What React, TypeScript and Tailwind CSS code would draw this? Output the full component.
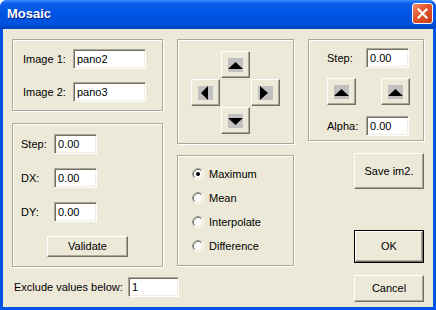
import * as React from 'react';

const raised =
  'border border-t-white border-l-white border-r-[#716f64] border-b-[#716f64] shadow-[inset_-1px_-1px_0_#aca899] bg-[#ece9d8]';
const sunken =
  'border border-t-[#aca899] border-l-[#aca899] border-r-white border-b-white shadow-[inset_1px_1px_0_#716f64,inset_-1px_-1px_0_#f1efe2] bg-white';
const group = 'border border-[#aca899] shadow-[inset_1px_1px_0_#fff,1px_1px_0_#fff]';

const Field: React.FC<{ value: string; w: string }> = ({ value, w }) => (
  <input
    readOnly
    defaultValue={value}
    className={`${sunken} ${w} h-[20px] px-[3px] text-[11px] text-black outline-none font-['Liberation_Sans']`}
  />
);

type Dir = 'up' | 'down' | 'left' | 'right';

const arrowPoints: Record<Dir, string> = {
  up: '0,11 15,11 7.5,4',
  down: '0,4 15,4 7.5,11',
  left: '10,0 10,14 3,7',
  right: '2,0 2,14 10,7',
};

const ArrowButton: React.FC<{ dir: Dir }> = ({ dir }) => (
  <button className={`${raised} w-[29px] h-[27px] flex items-center justify-center`}>
    <svg width="15" height="14" viewBox="0 0 15 14">
      <rect width="15" height="14" fill="#c0c0c0" />
      <polygon points={arrowPoints[dir]} fill="#000" />
    </svg>
  </button>
);

const Radio: React.FC<{ label: string; checked?: boolean }> = ({ label, checked }) => (
  <div className="h-[24px] flex items-center">
    <svg width="12" height="12" viewBox="0 0 12 12" className="ml-[14px]">
      <circle cx="6" cy="6" r="5.5" fill="#fff" />
      <path d="M9.89 2.11 A5.5 5.5 0 0 0 2.11 9.89" stroke="#9d9a8c" fill="none" />
      <path d="M9.18 2.82 A4.5 4.5 0 0 0 2.82 9.18" stroke="#716f64" fill="none" />
      <path d="M2.11 9.89 A5.5 5.5 0 0 0 9.89 2.11" stroke="#fff" fill="none" />
      <path d="M2.82 9.18 A4.5 4.5 0 0 0 9.18 2.82" stroke="#e2dfd0" fill="none" />
      {checked && <circle cx="6" cy="6" r="2" fill="#000" />}
    </svg>
    <span className="ml-[5px]">{label}</span>
  </div>
);

export default function App() {
  return (
    <div className="w-[436px] h-[310px] flex flex-col bg-[#0054e3] rounded-t-[7px] font-['Liberation_Sans'] text-[11px] text-black select-none">
      {/* title bar */}
      <div className="h-[29px] flex items-center justify-between pl-[7px] pr-[3px] rounded-t-[7px] bg-[linear-gradient(180deg,#3d8cff_0%,#0a5fe9_12%,#0055e5_45%,#0052df_80%,#0043c2_100%)]">
        <span className="text-white font-bold text-[13px] [text-shadow:1px_1px_0_#0b1f8c] -mt-[1px]">Mosaic</span>
        <div className="w-[21px] h-[21px] -mt-[3px] rounded-[3px] border border-white flex items-center justify-center bg-[linear-gradient(135deg,#f0906c_0%,#e2532a_45%,#c8401c_100%)]">
          <svg width="11" height="11" viewBox="0 0 11 11">
            <path d="M1.5 1.5 L9.5 9.5 M9.5 1.5 L1.5 9.5" stroke="#fff" strokeWidth="2.2" strokeLinecap="square" />
          </svg>
        </div>
      </div>

      {/* client area */}
      <div className="flex-1 mx-[3px] mb-[3px] bg-[#ece9d8] flex gap-[14px] pt-[10px] pl-[9px]">
        {/* left column */}
        <div className="w-[151px] flex flex-col">
          <div className={`${group} h-[72px] pt-[9px] pl-[10px] flex flex-col gap-[13px]`}>
            <div className="flex items-center">
              <span className="w-[50px]">Image 1:</span>
              <Field value="pano2" w="w-[73px]" />
            </div>
            <div className="flex items-center">
              <span className="w-[50px]">Image 2:</span>
              <Field value="pano3" w="w-[73px]" />
            </div>
          </div>

          <div className={`${group} h-[144px] mt-[12px] pt-[10px] pl-[8px] flex flex-col gap-[14px]`}>
            <div className="flex items-center">
              <span className="w-[33px]">Step:</span>
              <Field value="0.00" w="w-[43px]" />
            </div>
            <div className="flex items-center">
              <span className="w-[33px]">DX:</span>
              <Field value="0.00" w="w-[43px]" />
            </div>
            <div className="flex items-center">
              <span className="w-[33px]">DY:</span>
              <Field value="0.00" w="w-[43px]" />
            </div>
            <button className={`${raised} self-center -ml-[8px] w-[81px] h-[21px]`}>Validate</button>
          </div>

          <div className="mt-[10px] ml-[2px] flex items-center w-max">
            <span className="w-[114px]">Exclude values below:</span>
            <Field value="1" w="w-[51px]" />
          </div>
        </div>

        {/* center column */}
        <div className="w-[117px] flex flex-col">
          <div className={`${group} h-[105px] pt-[11px] flex justify-center`}>
            <div className="grid grid-cols-[29px_29px_29px] grid-rows-[27px_27px_27px] gap-[1px] h-max">
              <div />
              <ArrowButton dir="up" />
              <div />
              <ArrowButton dir="left" />
              <div />
              <ArrowButton dir="right" />
              <div />
              <ArrowButton dir="down" />
              <div />
            </div>
          </div>

          <div className={`${group} h-[111px] mt-[11px] pt-[6px] flex flex-col`}>
            <Radio label="Maximum" checked />
            <Radio label="Mean" />
            <Radio label="Interpolate" />
            <Radio label="Difference" />
          </div>
        </div>

        {/* right column */}
        <div className="w-[116px] flex flex-col">
          <div className={`${group} h-[102px] pt-[8px] pl-[18px] flex flex-col`}>
            <div className="flex items-center">
              <span className="w-[39px]">Step:</span>
              <Field value="0.00" w="w-[43px]" />
            </div>
            <div className="flex gap-[25px] mt-[10px]">
              <ArrowButton dir="up" />
              <ArrowButton dir="up" />
            </div>
            <div className="flex items-center mt-[11px]">
              <span className="w-[39px]">Alpha:</span>
              <Field value="0.00" w="w-[43px]" />
            </div>
          </div>

          <button className={`${raised} self-end w-[70px] h-[36px] mt-[12px]`}>Save im2.</button>

          <div className="self-end mt-[41px] w-[70px] h-[33px] border border-black">
            <button className={`${raised} w-full h-full`}>OK</button>
          </div>

          <button className={`${raised} self-end w-[70px] h-[27px] mt-[12px]`}>Cancel</button>
        </div>
      </div>
    </div>
  );
}
